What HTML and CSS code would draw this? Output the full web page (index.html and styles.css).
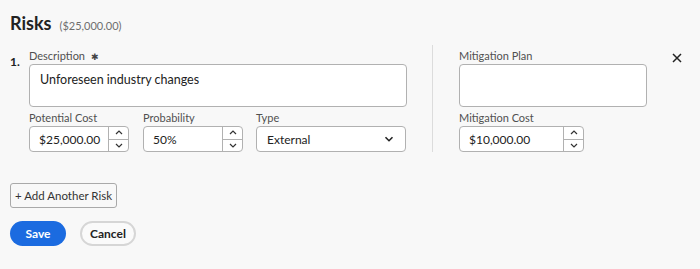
FILE: index.html
```html
<!DOCTYPE html>
<html lang="en">
<head>
  <meta charset="UTF-8" />
  <title>Risks</title>
  <link rel="stylesheet" href="styles.css">
</head>
<body>

  <div class="header">
    <h1>Risks</h1>
    <span class="total">($25,000.00)</span>
  </div>

  <div class="risk">
    <div class="index">1.</div>

    <div class="left">
      <label class="field-label">Description <span class="req">✱</span></label>
      <div class="textarea">Unforeseen industry changes</div>

      <div class="row">
        <div class="field cost">
          <label class="field-label">Potential Cost</label>
          <div class="number-input">
            <span class="value">$25,000.00</span>
            <span class="stepper">
              <span class="step"><svg width="8" height="5" viewBox="0 0 8 5"><path d="M1 4 L4 1 L7 4" fill="none" stroke="#333" stroke-width="1.2"/></svg></span>
              <span class="step"><svg width="8" height="5" viewBox="0 0 8 5"><path d="M1 1 L4 4 L7 1" fill="none" stroke="#333" stroke-width="1.2"/></svg></span>
            </span>
          </div>
        </div>

        <div class="field prob">
          <label class="field-label">Probability</label>
          <div class="number-input">
            <span class="value">50%</span>
            <span class="stepper">
              <span class="step"><svg width="8" height="5" viewBox="0 0 8 5"><path d="M1 4 L4 1 L7 4" fill="none" stroke="#333" stroke-width="1.2"/></svg></span>
              <span class="step"><svg width="8" height="5" viewBox="0 0 8 5"><path d="M1 1 L4 4 L7 1" fill="none" stroke="#333" stroke-width="1.2"/></svg></span>
            </span>
          </div>
        </div>

        <div class="field type">
          <label class="field-label">Type</label>
          <div class="select">
            <span class="value">External</span>
            <svg width="10" height="6" viewBox="0 0 10 6"><path d="M1.5 1.2 L5 4.7 L8.5 1.2" fill="none" stroke="#222" stroke-width="1.6"/></svg>
          </div>
        </div>
      </div>
    </div>

    <div class="divider"></div>

    <div class="right">
      <label class="field-label">Mitigation Plan</label>
      <div class="textarea"></div>

      <div class="field mcost">
        <label class="field-label">Mitigation Cost</label>
        <div class="number-input">
          <span class="value">$10,000.00</span>
          <span class="stepper">
            <span class="step"><svg width="8" height="5" viewBox="0 0 8 5"><path d="M1 4 L4 1 L7 4" fill="none" stroke="#333" stroke-width="1.2"/></svg></span>
            <span class="step"><svg width="8" height="5" viewBox="0 0 8 5"><path d="M1 1 L4 4 L7 1" fill="none" stroke="#333" stroke-width="1.2"/></svg></span>
          </span>
        </div>
      </div>
    </div>

    <button class="close" aria-label="Remove">
      <svg width="10" height="10" viewBox="0 0 10 10"><path d="M1 1 L9 9 M9 1 L1 9" stroke="#222" stroke-width="1.5"/></svg>
    </button>
  </div>

  <button class="add-btn">+ Add Another Risk</button>

  <div class="actions">
    <button class="save">Save</button>
    <button class="cancel">Cancel</button>
  </div>

</body>
</html>
```

FILE: styles.css
```css
* {
  margin: 0;
  padding: 0;
  box-sizing: border-box;
}

body {
  background-color: #f8f8f8;
  color: #2c2c2c;
  font-family: Lato, "Noto Sans", sans-serif;
  padding: 14px 10px 10px;
}

.header {
  display: flex;
  align-items: baseline;
  gap: 8px;
  height: 18px;
}

h1 {
  font-size: 18px;
  font-weight: 700;
  color: #222;
  line-height: 18px;
}

.total {
  font-size: 11px;
  color: #6e6e6e;
}

.risk {
  display: flex;
  margin-top: 17px;
}

.index {
  width: 19px;
  font-size: 12px;
  font-weight: 700;
  padding-top: 5px;
  color: #222;
}

.left {
  width: 378px;
}

.field-label {
  display: block;
  font-size: 11px;
  color: #505050;
  line-height: 14px;
  height: 15px;
}

.req {
  margin-left: 3px;
  font-size: 9px;
  color: #444;
}

.textarea {
  height: 43px;
  background: #fff;
  border: 1px solid #b1b1b1;
  border-radius: 4px;
  padding: 7px 10px;
  font-size: 12.5px;
  color: #222;
}

.row {
  display: flex;
  gap: 14px;
  margin-top: 4px;
}

.cost { width: 100px; }
.prob { width: 100px; }
.type { width: 150px; margin-left: -1px; }

.number-input,
.select {
  display: flex;
  align-items: center;
  height: 26px;
  background: #fff;
  border: 1px solid #b1b1b1;
  border-radius: 4px;
  font-size: 12px;
  color: #222;
}

.value {
  flex: 1;
  padding-left: 9px;
}

.stepper {
  display: flex;
  flex-direction: column;
  width: 20px;
  height: 100%;
  border-left: 1px solid #b1b1b1;
}

.step {
  flex: 1;
  display: flex;
  align-items: center;
  justify-content: center;
}

.step + .step {
  border-top: 1px solid #b1b1b1;
}

.select {
  padding-right: 11px;
}

.select .value {
  padding-left: 10px;
}

.divider {
  width: 1px;
  background: #dcdcdc;
  margin: -4px 26px 0 25px;
}

.right {
  width: 188px;
}

.mcost {
  width: 125px;
  margin-top: 4px;
}

.close {
  background: none;
  border: none;
  margin-left: 25px;
  margin-top: 2px;
  width: 10px;
  height: 10px;
  align-self: flex-start;
}

.add-btn {
  display: block;
  margin-top: 31px;
  height: 25px;
  width: 107px;
  padding: 0;
  background: #f8f8f8;
  border: 1px solid #a9a9a9;
  border-radius: 3px;
  font-family: inherit;
  font-size: 11.5px;
  color: #333;
}

.actions {
  display: flex;
  gap: 14px;
  margin-top: 13px;
}

.save,
.cancel {
  height: 25px;
  border-radius: 13px;
  font-family: inherit;
  font-size: 12px;
  font-weight: 700;
}

.save {
  width: 56px;
  background: #1b6be0;
  border: none;
  color: #fff;
}

.cancel {
  width: 56px;
  background: #fafafa;
  border: 2px solid #d6d6d6;
  color: #222;
}
```
